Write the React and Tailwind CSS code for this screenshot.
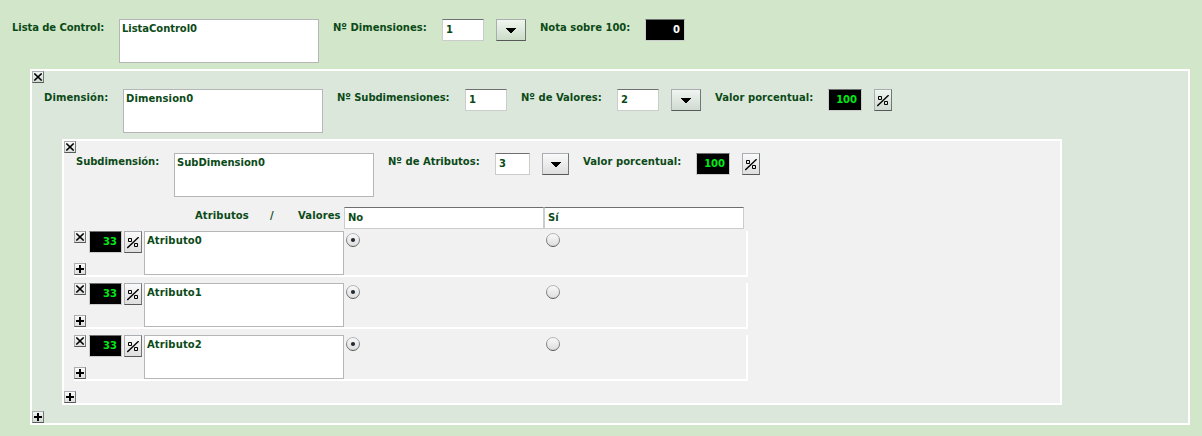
import React from "react";

function Label({ className = "", children }) {
  return (
    <span className={`shrink-0 pt-[3px] leading-[12px] whitespace-nowrap ${className}`}>
      {children}
    </span>
  );
}

function TextArea({ children, className = "" }) {
  return (
    <div className={`h-[44px] w-[200px] shrink-0 border border-[#b4b6b8] bg-white pt-[3px] pl-[2px] leading-[12px] ${className}`}>
      {children}
    </div>
  );
}

function TextInput({ children, className = "" }) {
  return (
    <div className={`h-[22px] shrink-0 border border-[#cbcccc] border-t-[#6d6f70] bg-white pt-[4px] pl-[3px] leading-[12px] ${className}`}>
      {children}
    </div>
  );
}

function Score({ children, className = "" }) {
  return (
    <div className={`h-[22px] shrink-0 border border-[#cbcccc] border-t-[#6d6f70] bg-black pt-[4px] pr-[4px] text-right leading-[12px] ${className}`}>
      {children}
    </div>
  );
}

const buttonFrame =
  "flex shrink-0 items-center justify-center border border-[#aaaeb3] border-b-[#575959] border-r-[#6f7777] bg-linear-to-b";

const tones = {
  green: "from-[#f0f6ee] to-[#ccdcc8]",
  mint: "from-[#f0f5f1] to-[#d0dad1]",
  gray: "from-[#fafafa] to-[#dedede]",
};

function DropButton({ tone, className = "w-[30px]" }) {
  return (
    <button className={`h-[22px] ${buttonFrame} ${tones[tone]} ${className}`}>
      <svg width="10" height="5" viewBox="0 0 10 5" shapeRendering="crispEdges" className="mt-px">
        <path d="M0 0h10v1h-1v1h-1v1h-1v1h-1v1h-2v-1h-1v-1h-1v-1h-1v-1h-1z" />
      </svg>
    </button>
  );
}

function PercentButton({ tone = "gray", className = "" }) {
  return (
    <button className={`h-[22px] w-[18px] ${buttonFrame} ${tones[tone]} ${className}`}>
      <svg width="12" height="12" viewBox="0 0 12 12" fill="none" stroke="#000" className="mt-[2px]">
        <path d="M0.3 11L11.6 0.2" strokeWidth="1.35" />
        <path d="M1.5 1.5h3v3h-3zM7.5 6.5h3v3h-3z" />
      </svg>
    </button>
  );
}

function SmallButton({ kind, tone = "gray" }) {
  return (
    <button className={`h-[12px] w-[12px] ${buttonFrame} ${tones[tone]}`}>
      {kind === "close" ? (
        <svg width="8" height="8" viewBox="0 0 8 8" stroke="#000" strokeWidth="1.6">
          <path d="M0.3 0.5L7.7 7.5M7.7 0.5L0.3 7.5" />
        </svg>
      ) : (
        <svg width="8" height="8" viewBox="0 0 8 8" shapeRendering="crispEdges">
          <path d="M3 0h2v3h3v2h-3v3h-2v-3h-3v-2h3z" />
        </svg>
      )}
    </button>
  );
}

function Radio({ checked }) {
  return (
    <svg width="14" height="14" viewBox="0 0 14 14" className="mt-[2px] shrink-0">
      <defs>
        <linearGradient id="radioFill" x1="0" y1="0" x2="0" y2="1">
          <stop offset="0" stopColor="#fafafa" />
          <stop offset="1" stopColor="#dcdcdc" />
        </linearGradient>
        <linearGradient id="radioEdge" x1="0" y1="0" x2="0" y2="1">
          <stop offset="0" stopColor="#b4b7ba" />
          <stop offset="1" stopColor="#575959" />
        </linearGradient>
      </defs>
      <circle cx="7" cy="7" r="6.5" fill="url(#radioFill)" stroke="url(#radioEdge)" />
      {checked && <circle cx="7" cy="7" r="2.1" fill="#222b33" />}
    </svg>
  );
}

function AttributeRow({ name }) {
  return (
    <div className="flex h-[46px] w-[674px] border-r-2 border-b-2 border-white">
      <div className="flex w-[15px] shrink-0 flex-col justify-between">
        <SmallButton kind="close" />
        <SmallButton kind="add" />
      </div>
      <Score className="w-[33px] text-[#00e818]">33</Score>
      <PercentButton className="mr-[2px] ml-[2px]" />
      <TextArea className="tracking-[0.12px]">{name}</TextArea>
      <div className="flex pl-[2px]">
        <div className="w-[200px]">
          <Radio checked />
        </div>
        <Radio />
      </div>
    </div>
  );
}

function Subdimension() {
  return (
    <section className="ml-[30px] h-[266px] w-[1000px] border-2 border-white bg-[#f1f1f1]">
      <SmallButton kind="close" />
      <div className="flex pl-[12px]">
        <Label className="w-[98px] tracking-[-0.05px]">Subdimensión:</Label>
        <TextArea>SubDimension0</TextArea>
        <Label className="ml-[14px] w-[107px]">Nº de Atributos:</Label>
        <TextInput className="mr-[12px] w-[35px]">3</TextInput>
        <DropButton tone="gray" className="w-[27px]" />
        <Label className="ml-[14px] w-[113px] tracking-[0.05px]">Valor porcentual:</Label>
        <Score className="mr-[12px] w-[34px] text-[#00e818]">100</Score>
        <PercentButton />
      </div>
      <div className="mt-[10px] flex">
        <Label className="ml-[131px] w-[75px] tracking-[0.12px]">Atributos</Label>
        <Label className="w-[28px]">/</Label>
        <Label className="w-[46px] tracking-[0.1px]">Valores</Label>
        <TextInput className="w-[200px]">No</TextInput>
        <TextInput className="w-[200px]">Sí</TextInput>
      </div>
      <div className="mt-[2px] mb-[10px] ml-[10px] flex flex-col gap-[6px]">
        <AttributeRow name="Atributo0" />
        <AttributeRow name="Atributo1" />
        <AttributeRow name="Atributo2" />
      </div>
      <SmallButton kind="add" />
    </section>
  );
}

function Dimension() {
  return (
    <section className="mt-[6px] ml-[30px] h-[356px] w-[1160px] border-2 border-white bg-[#dce7dc]">
      <SmallButton kind="close" tone="mint" />
      <div className="mt-[6px] mb-[6px] flex pl-[12px]">
        <Label className="w-[79px] tracking-[0.08px]">Dimensión:</Label>
        <TextArea className="tracking-[0.1px]">Dimension0</TextArea>
        <Label className="ml-[14px] w-[128px] tracking-[-0.08px]">Nº Subdimensiones:</Label>
        <TextInput className="w-[42px]">1</TextInput>
        <Label className="ml-[14px] w-[96px]">Nº de Valores:</Label>
        <TextInput className="mr-[12px] w-[42px]">2</TextInput>
        <DropButton tone="mint" />
        <Label className="ml-[14px] w-[113px] tracking-[0.05px]">Valor porcentual:</Label>
        <Score className="mr-[12px] w-[34px] text-[#00e818]">100</Score>
        <PercentButton tone="mint" />
      </div>
      <Subdimension />
      <div className="mt-[6px]">
        <SmallButton kind="add" tone="mint" />
      </div>
    </section>
  );
}

export default function App() {
  return (
    <main className="h-[436px] w-[1202px] overflow-hidden bg-[#d2e6c9] pt-[19px] font-['Verdana','DejaVu_Sans',sans-serif] text-[10px] font-bold text-[#0b4a17]">
      <div className="flex pl-[12px]">
        <Label className="w-[107px] tracking-[-0.08px]">Lista de Control:</Label>
        <TextArea className="tracking-[-0.05px]">ListaControl0</TextArea>
        <Label className="ml-[14px] w-[109px]">Nº Dimensiones:</Label>
        <TextInput className="mr-[12px] w-[42px]">1</TextInput>
        <DropButton tone="green" />
        <Label className="ml-[14px] w-[105px]">Nota sobre 100:</Label>
        <Score className="w-[40px] text-white">0</Score>
      </div>
      <Dimension />
    </main>
  );
}
